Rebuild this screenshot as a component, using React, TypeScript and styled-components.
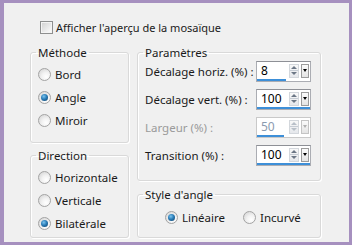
import React from "react";
import styled, { createGlobalStyle } from "styled-components";

const Global = createGlobalStyle`
  html, body { margin: 0; padding: 0; background: #f0f0f0; }
  * { box-sizing: border-box; }
`;

const FONT = `"Noto Sans", "Open Sans", sans-serif`;

const Frame = styled.div`
  width: 352px;
  height: 245px;
  border-style: solid;
  border-color: #a690bf;
  border-width: 3px 3px 3px 4px;
  background: #f0f0f0;
  padding: 18px 28px 0 26px;
  font-family: ${FONT};
  font-size: 11px;
  color: #1a1a1a;
  overflow: hidden;
`;

const CheckRow = styled.label`
  display: flex;
  align-items: center;
  gap: 3px;
  height: 13px;
  margin-left: 10px;
  line-height: 13px;
`;

const CheckBox = styled.span`
  width: 13px;
  height: 13px;
  border: 1px solid #8e8f8f;
  background: linear-gradient(135deg, #d0d0d0 0%, #ececec 60%, #ffffff 100%);
  box-shadow: inset 0 0 0 1px #f4f4f4;
  flex: none;
`;

const Columns = styled.div`
  display: grid;
  grid-template-columns: 99px 184px;
  column-gap: 8px;
  margin-top: 12px;
`;

const Column = styled.div<{ $gap: number }>`
  display: flex;
  flex-direction: column;
  gap: ${(p) => p.$gap}px;
`;

const Group = styled.fieldset<{ $h: number }>`
  margin: 0;
  padding: 0;
  height: ${(p) => p.$h}px;
  border: 1px solid #d9d9d9;
  border-radius: 3px;
  box-shadow: inset 1px 1px 0 #ffffff, 1px 1px 0 #ffffff;
  min-width: 0;
`;

const Legend = styled.legend`
  margin-left: 5px;
  padding: 0 2px;
  font-size: 11.5px;
  line-height: 13px;
  height: 13px;
  color: #1a1a1a;
`;

const RadioList = styled.div`
  display: flex;
  flex-direction: column;
  padding: 4px 0 0 7px;
`;

const RadioRow = styled.label<{ $h?: number }>`
  display: flex;
  align-items: center;
  gap: 4px;
  height: ${(p) => p.$h ?? 23}px;
  font-size: 11.5px;
`;

const RadioDot = styled.span<{ $on?: boolean }>`
  width: 13px;
  height: 13px;
  border-radius: 50%;
  border: 1px solid #a3a3a3;
  flex: none;
  display: flex;
  align-items: center;
  justify-content: center;
  background: radial-gradient(circle at 65% 70%, #ffffff 0%, #f2f2f2 40%, #cfcfcf 100%);
  &::after {
    content: "";
    display: ${(p) => (p.$on ? "block" : "none")};
    width: 7px;
    height: 7px;
    border-radius: 50%;
    background: radial-gradient(circle at 40% 35%, #7cc4ee 0%, #2a7db8 45%, #0e3a60 100%);
  }
`;

const ParamList = styled.div`
  display: flex;
  flex-direction: column;
  gap: 7px;
  padding: 2px 9px 0 7px;
`;

const ParamRow = styled.div<{ $off?: boolean }>`
  display: flex;
  align-items: center;
  justify-content: space-between;
  height: 21px;
  font-size: 11.5px;
  color: ${(p) => (p.$off ? "#9a9a9a" : "#1a1a1a")};
`;

const Spin = styled.div<{ $off?: boolean }>`
  width: 55px;
  height: 21px;
  background: #ffffff;
  border: 1px solid ${(p) => (p.$off ? "#c9c9c9" : "#abadb3")};
  border-top-color: ${(p) => (p.$off ? "#c9c9c9" : "#8e9096")};
  display: flex;
  flex-direction: column;
`;

const SpinTop = styled.div`
  flex: 1;
  display: flex;
  align-items: center;
  padding: 0 1px 0 4px;
`;

const SpinValue = styled.span<{ $off?: boolean }>`
  flex: 1;
  font-size: 12px;
  color: ${(p) => (p.$off ? "#8a9bb0" : "#000")};
`;

const Arrows = styled.div`
  width: 10px;
  height: 14px;
  display: flex;
  flex-direction: column;
  margin-right: 2px;
  border: 1px solid #d3d7dc;
  background: linear-gradient(#f8f8f8, #e6e8ec);
`;

const ArrowHalf = styled.div<{ $down?: boolean; $off?: boolean }>`
  flex: 1;
  display: flex;
  align-items: center;
  justify-content: center;
  border-top: ${(p) => (p.$down ? "1px solid #c6ccd4" : "none")};
  &::after {
    content: "";
    width: 0;
    height: 0;
    border-left: 3px solid transparent;
    border-right: 3px solid transparent;
    ${(p) =>
      p.$down
        ? `border-top: 3px solid ${p.$off ? "#b8bfc8" : "#6c7786"};`
        : `border-bottom: 3px solid ${p.$off ? "#b8bfc8" : "#6c7786"};`}
  }
`;

const DropBtn = styled.div<{ $off?: boolean }>`
  width: 8px;
  height: 14px;
  border: 1px solid ${(p) => (p.$off ? "#c4c4c4" : "#9c9c9c")};
  background: linear-gradient(#fbfbfb, #e4e4e4);
  display: flex;
  align-items: center;
  justify-content: center;
  &::after {
    content: "";
    border-left: 2.5px solid transparent;
    border-right: 2.5px solid transparent;
    border-top: 3px solid ${(p) => (p.$off ? "#b0b0b0" : "#000")};
  }
`;

const Bar = styled.div`
  height: 3px;
  background: #3d8fd8;
`;

const StyleRow = styled.div`
  display: flex;
  align-items: center;
  padding: 7px 0 0 27px;
`;

const StyleOption = styled(RadioRow)<{ $w?: number }>`
  width: ${(p) => (p.$w ? `${p.$w}px` : "auto")};
`;

type Param = { label: string; value: string; frac: number; off?: boolean };

const params: Param[] = [
  { label: "Décalage horiz. (%) :", value: "8", frac: 0.54 },
  { label: "Décalage vert. (%) :", value: "100", frac: 1 },
  { label: "Largeur (%) :", value: "50", frac: 0.5, off: true },
  { label: "Transition (%) :", value: "100", frac: 1 },
];

function SpinBox({ p }: { p: Param }) {
  return (
    <Spin $off={p.off}>
      <SpinTop>
        <SpinValue $off={p.off}>{p.value}</SpinValue>
        <Arrows>
          <ArrowHalf $off={p.off} />
          <ArrowHalf $down $off={p.off} />
        </Arrows>
        <DropBtn $off={p.off} />
      </SpinTop>
      <Bar style={{ width: `${p.frac * 100}%` }} />
    </Spin>
  );
}

export default function App() {
  return (
    <>
      <Global />
      <Frame>
        <CheckRow>
          <CheckBox />
          <span>Afficher l'aperçu de la mosaïque</span>
        </CheckRow>
        <Columns>
          <Column $gap={6}>
            <Group $h={97}>
              <Legend>Méthode</Legend>
              <RadioList>
                <RadioRow><RadioDot />Bord</RadioRow>
                <RadioRow><RadioDot $on />Angle</RadioRow>
                <RadioRow><RadioDot />Miroir</RadioRow>
              </RadioList>
            </Group>
            <Group $h={89}>
              <Legend>Direction</Legend>
              <RadioList>
                <RadioRow><RadioDot />Horizontale</RadioRow>
                <RadioRow><RadioDot />Verticale</RadioRow>
                <RadioRow><RadioDot $on />Bilatérale</RadioRow>
              </RadioList>
            </Group>
          </Column>
          <Column $gap={7}>
            <Group $h={135}>
              <Legend>Paramètres</Legend>
              <ParamList>
                {params.map((p) => (
                  <ParamRow key={p.label} $off={p.off}>
                    <span>{p.label}</span>
                    <SpinBox p={p} />
                  </ParamRow>
                ))}
              </ParamList>
            </Group>
            <Group $h={50}>
              <Legend>Style d'angle</Legend>
              <StyleRow>
                <StyleOption $h={18} $w={78}><RadioDot $on />Linéaire</StyleOption>
                <StyleOption $h={18}><RadioDot />Incurvé</StyleOption>
              </StyleRow>
            </Group>
          </Column>
        </Columns>
      </Frame>
    </>
  );
}
